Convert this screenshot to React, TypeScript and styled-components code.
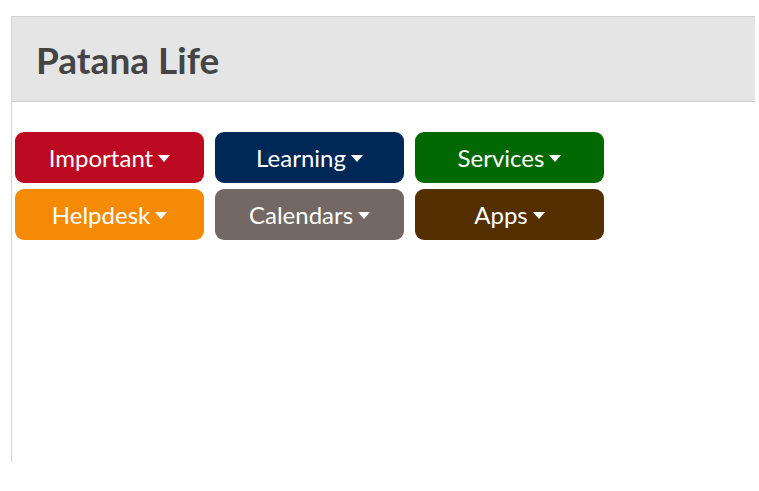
import styled, { createGlobalStyle } from 'styled-components';
import { ReactElement } from 'react';

const GlobalStyle = createGlobalStyle`
  body {
    margin: 0;
    background: #fff;
    font-family: Lato, "Liberation Sans", sans-serif;
  }
`;

const Page = styled.div`
  padding: 16px 0 0 11px;
`;

const Frame = styled.main`
  width: 743px;
  height: 446px;
  border-left: 1px solid #d4d4d4;
`;

const Header = styled.header`
  height: 84px;
  display: flex;
  align-items: center;
  padding-left: 24px;
  background: #e5e5e5;
  border-top: 1px solid #d2d2d2;
  border-bottom: 1px solid #d2d2d2;

  & > h1 {
    margin: 0;
    font-size: 37px;
    font-weight: 700;
    color: #444;
  }
`;

const Menu = styled.nav`
  display: grid;
  grid-template-columns: repeat(3, 189px);
  grid-auto-rows: 51px;
  column-gap: 11px;
  row-gap: 6px;
  margin-top: 30px;
  padding-left: 3px;
`;

const MenuButton = styled.button<{ $color: string }>`
  display: flex;
  align-items: center;
  justify-content: center;
  gap: 5px;
  border: none;
  border-radius: 9px;
  background: ${({ $color }) => $color};
  color: #fff;
  font-family: Lato, "Liberation Sans", sans-serif;
  font-size: 24px;
  padding: 0;
  cursor: pointer;
`;

const Caret = styled.span`
  width: 0;
  height: 0;
  margin-top: 2px;
  border-left: 6px solid transparent;
  border-right: 6px solid transparent;
  border-top: 7px solid #fff;
`;

const items = [
  { label: 'Important', color: '#bd0a23' },
  { label: 'Learning', color: '#002857' },
  { label: 'Services', color: '#026802' },
  { label: 'Helpdesk', color: '#f58a07' },
  { label: 'Calendars', color: '#736864' },
  { label: 'Apps', color: '#532f02' },
];

export default function App(): ReactElement {
  return (
    <Page>
      <GlobalStyle />
      <Frame>
        <Header>
          <h1>Patana Life</h1>
        </Header>
        <Menu>
          {items.map((item) => (
            <MenuButton key={item.label} $color={item.color}>
              {item.label}
              <Caret />
            </MenuButton>
          ))}
        </Menu>
      </Frame>
    </Page>
  );
}
